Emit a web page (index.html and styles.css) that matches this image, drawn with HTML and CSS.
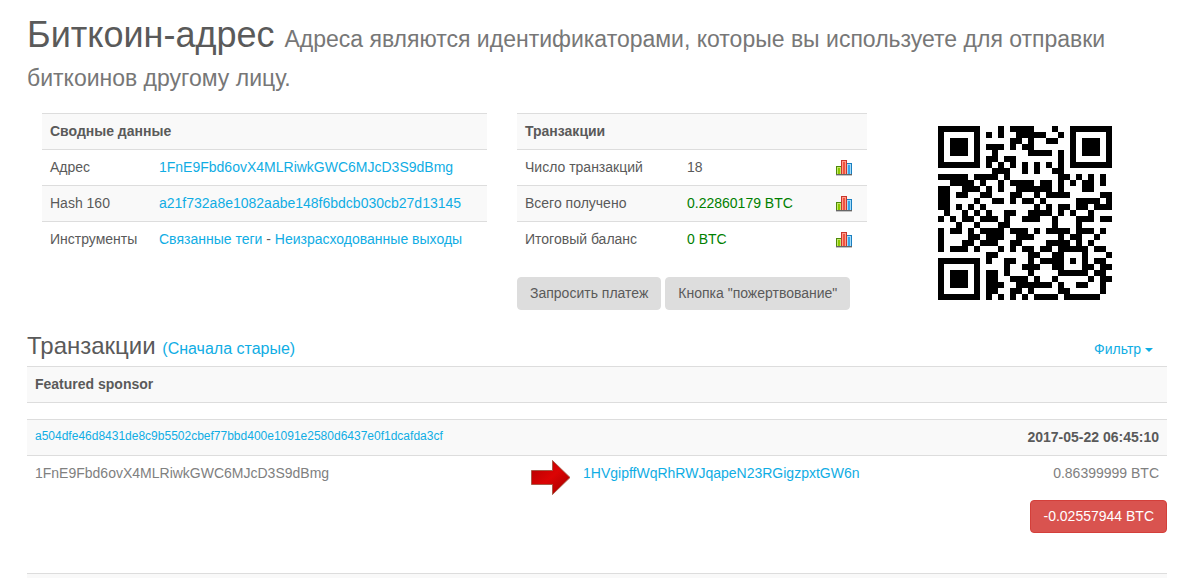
FILE: index.html
```html
<!DOCTYPE html>
<html lang="ru">
<head>
  <meta charset="UTF-8">
  <meta name="viewport" content="width=device-width, initial-scale=1">
  <title>Биткоин-адрес</title>
  <link rel="stylesheet" href="styles.css">
</head>
<body>
  <svg class="sprite" aria-hidden="true">
    <symbol id="chart" viewBox="0 0 16 16">
      <rect x="0" y="14" width="16" height="2" fill="#c4c4c4"/>
      <rect x="0" y="14" width="16" height="1" fill="#666"/>
      <rect x="0" y="6" width="6" height="8" fill="#4e8a0a"/>
      <rect x="1" y="7" width="4" height="7" fill="#c5e86c"/>
      <rect x="2" y="8" width="2" height="6" fill="#8cc800"/>
      <rect x="10" y="3" width="6" height="11" fill="#1a7fc0"/>
      <rect x="11" y="4" width="4" height="10" fill="#a5dcfa"/>
      <rect x="12" y="5" width="2" height="9" fill="#3aa5ea"/>
      <rect x="5" y="0" width="6" height="14" fill="#c8372d"/>
      <rect x="6" y="1" width="4" height="13" fill="#ff9c8c"/>
      <rect x="7" y="2" width="2" height="12" fill="#f0553f"/>
    </symbol>
  </svg>

  <div class="container">
    <h1>Биткоин-адрес <small>Адреса являются идентификаторами, которые вы используете для отправки биткоинов другому лицу.</small></h1>

    <div class="row">
      <div class="col">
        <table class="table summary">
          <thead>
            <tr><th colspan="2">Сводные данные</th></tr>
          </thead>
          <tbody>
            <tr><td class="label">Адрес</td><td><a href="#" id="address">1FnE9Fbd6ovX4MLRiwkGWC6MJcD3S9dBmg</a></td></tr>
            <tr><td>Hash 160</td><td><a href="#">a21f732a8e1082aabe148f6bdcb030cb27d13145</a></td></tr>
            <tr><td>Инструменты</td><td><a href="#">Связанные теги</a> - <a href="#">Неизрасходованные выходы</a></td></tr>
          </tbody>
        </table>
      </div>
      <div class="col">
        <table class="table totals">
          <thead>
            <tr><th colspan="3">Транзакции</th></tr>
          </thead>
          <tbody>
            <tr><td class="label">Число транзакций</td><td>18</td><td class="icon"><a href="#" aria-label="График"><svg><use href="#chart"/></svg></a></td></tr>
            <tr><td>Всего получено</td><td class="green">0.22860179 BTC</td><td class="icon"><a href="#" aria-label="График"><svg><use href="#chart"/></svg></a></td></tr>
            <tr><td>Итоговый баланс</td><td class="green">0 BTC</td><td class="icon"><a href="#" aria-label="График"><svg><use href="#chart"/></svg></a></td></tr>
          </tbody>
        </table>
        <div class="buttons">
          <button class="btn" type="button">Запросить платеж</button>
          <button class="btn" type="button">Кнопка "пожертвование"</button>
        </div>
      </div>
      <div class="col qr">
        <svg viewBox="0 0 29 29" role="img" aria-label="QR" shape-rendering="crispEdges"><path id="qrPath"/></svg>
      </div>
    </div>

    <div class="section-head">
      <h2>Транзакции <a href="#">(Сначала старые)</a></h2>
      <button class="filter" type="button">Фильтр <span class="caret"></span></button>
    </div>

    <table class="table sponsor">
      <tr><th>Featured sponsor</th></tr>
    </table>

    <table class="table tx">
      <thead>
        <tr><th colspan="3"><a class="hash" href="#">a504dfe46d8431de8c9b5502cbef77bbd400e1091e2580d6437e0f1dcafda3cf</a></th><th class="right">2017-05-22 06:45:10</th></tr>
      </thead>
      <tbody>
        <tr>
          <td class="from">1FnE9Fbd6ovX4MLRiwkGWC6MJcD3S9dBmg</td>
          <td class="arrow">
            <svg viewBox="0 0 40 36" aria-hidden="true">
              <defs>
                <linearGradient id="red" x1="0" y1="0" x2="1" y2="1">
                  <stop offset="0" stop-color="#b00000"/>
                  <stop offset=".5" stop-color="#dc0404"/>
                  <stop offset="1" stop-color="#a00000"/>
                </linearGradient>
              </defs>
              <path d="M.5 10.500h21V.5L39 17.500 21.500 34.500V24.500H.5z" fill="url(#red)" stroke="#a85a48"/>
            </svg>
          </td>
          <td><a href="#">1HVgipffWqRhRWJqapeN23RGigzpxtGW6n</a></td>
          <td class="right amount">0.86399999 BTC</td>
        </tr>
      </tbody>
    </table>
    <div class="total">
      <button class="btn danger" type="button">-0.02557944 BTC</button>
    </div>

    <div class="next"></div>
  </div>

  <script src="qr.js"></script>
</body>
</html>
```
FILE: styles.css
```css
* { box-sizing: border-box; }
body { margin: 0; padding: 15px 32px 0 27px; font-family: "Liberation Sans", Arial, sans-serif; font-size: 14px; line-height: 19px; color: #5a5a5a; background: #fff; }
a { color: #10ade4; text-decoration: none; }
.sprite { display: none; }

h1 { margin: 0 0 20px; font-size: 36px; font-weight: 400; line-height: 39px; }
h1 small { font-size: 23px; line-height: 23px; color: #777; }

.row { display: grid; grid-template-columns: 5fr 4fr 3fr; }
.col { padding: 0 15px; min-width: 0; }

.table { width: 100%; border-collapse: collapse; }
.table th, .table td { padding: 8px; border-top: 1px solid #ddd; text-align: left; vertical-align: top; }
.table th { background: #f9f9f9; }
.summary tr:nth-child(2) td, .totals tr:nth-child(2) td { background: #f9f9f9; }
.summary .label { width: 109px; }
.totals .label { width: 162px; }
.table .icon { width: 39px; padding: 10px 8px 0; }
.icon svg { display: block; width: 16px; height: 16px; }
.green { color: green; }

.buttons { display: flex; gap: 4px; margin-top: 20px; }
.btn { padding: 6px 12px; border: 1px solid #ddd; border-radius: 4px; background: #ddd; color: #5a5a5a; font: inherit; white-space: nowrap; cursor: pointer; }
.danger { border-color: #d43f3a; background: #d9534f; color: #fff; }

.qr { display: flex; justify-content: center; align-items: flex-start; }
.qr svg { width: 174px; height: 174px; margin-top: 13px; }

.section-head { display: flex; justify-content: space-between; align-items: baseline; margin-top: 19px; padding-right: 14px; }
h2 { margin: 0; font-size: 24px; font-weight: 400; line-height: 34px; }
h2 a { font-size: 16px; }
.filter { padding: 0; border: 0; background: none; color: #10ade4; font: inherit; cursor: pointer; }
.caret { display: inline-block; vertical-align: middle; border-top: 4px solid; border-left: 4px solid transparent; border-right: 4px solid transparent; }

.sponsor { margin-bottom: 16px; border-bottom: 1px solid #ddd; }
.table .right { text-align: right; }
.hash { display: block; font-size: 12px; font-weight: 400; line-height: 16px; }
.from, .amount { color: #808080; }
.from { width: 496px; }
.table .arrow { width: 52px; padding: 4px 4px 4px 8px; }
.arrow svg { display: block; width: 40px; height: 36px; }
.total { display: flex; justify-content: flex-end; margin-bottom: 40px; }
.next { height: 5px; border-top: 1px solid #ddd; background: #f9f9f9; }
```
FILE: qr.js
```js
// QR code for the address: version 3, level L, byte mode, mask 2
const SIZE = 29;
const DATA_WORDS = 55;
const ECC_WORDS = 15;
const FORMAT = '111110110101010';

function mul(a, b) {
  let r = 0;
  for (; b; b >>= 1) {
    if (b & 1) r ^= a;
    a = (a << 1) ^ (a & 128 ? 0x11d : 0);
  }
  return r;
}

function codewords(text) {
  let bits = '0100' + text.length.toString(2).padStart(8, '0');
  for (const c of text) bits += c.charCodeAt(0).toString(2).padStart(8, '0');
  bits += '0000';
  const words = bits.match(/.{8}/g).map(b => parseInt(b, 2));
  for (let pad = 0xec; words.length < DATA_WORDS; pad ^= 0xfd) words.push(pad);

  let gen = [1];
  for (let i = 0, root = 1; i < ECC_WORDS; i++, root = mul(root, 2)) {
    const next = gen.concat(0);
    gen.forEach((g, j) => { next[j + 1] ^= mul(g, root); });
    gen = next;
  }
  const rem = words.concat(Array(ECC_WORDS).fill(0));
  for (let i = 0; i < DATA_WORDS; i++) {
    const lead = rem[i];
    gen.forEach((g, j) => { rem[i + j] ^= mul(g, lead); });
  }
  return words.concat(rem.slice(DATA_WORDS));
}

function qrMatrix(text) {
  const m = Array.from({length: SIZE}, () => Array(SIZE).fill(null));
  const set = (r, c, v) => { if (m[r] && c >= 0 && c < SIZE) m[r][c] = Number(v); };

  for (let i = 0; i < SIZE; i++) { set(6, i, i % 2 === 0); set(i, 6, i % 2 === 0); }
  for (const [r, c] of [[3, 3], [3, SIZE - 4], [SIZE - 4, 3]])
    for (let y = -4; y <= 4; y++)
      for (let x = -4; x <= 4; x++) {
        const d = Math.max(Math.abs(x), Math.abs(y));
        set(r + y, c + x, d !== 2 && d !== 4);
      }
  for (let y = -2; y <= 2; y++)
    for (let x = -2; x <= 2; x++)
      set(22 + y, 22 + x, Math.max(Math.abs(x), Math.abs(y)) !== 1);

  for (let i = 0; i < 15; i++) {
    const v = FORMAT[i];
    if (i < 6) set(8, i, v);
    else if (i < 8) set(8, i + 1, v);
    else if (i === 8) set(7, 8, v);
    else set(14 - i, 8, v);
    if (i < 7) set(SIZE - 1 - i, 8, v);
    else set(8, SIZE - 15 + i, v);
  }
  set(SIZE - 8, 8, 1);

  const bits = codewords(text).map(w => w.toString(2).padStart(8, '0')).join('');
  let n = 0, up = true;
  for (let right = SIZE - 1; right > 0; right -= 2) {
    if (right === 6) right = 5;
    for (let i = 0; i < SIZE; i++) {
      const r = up ? SIZE - 1 - i : i;
      for (const c of [right, right - 1])
        if (m[r][c] === null) m[r][c] = Number(bits[n++] || 0) ^ (c % 3 === 0);
    }
    up = !up;
  }
  return m;
}

let d = '';
qrMatrix(document.getElementById('address').textContent).forEach((row, y) =>
  row.forEach((v, x) => { if (v) d += `M${x} ${y}h1v1h-1z`; }));
document.getElementById('qrPath').setAttribute('d', d);
```
